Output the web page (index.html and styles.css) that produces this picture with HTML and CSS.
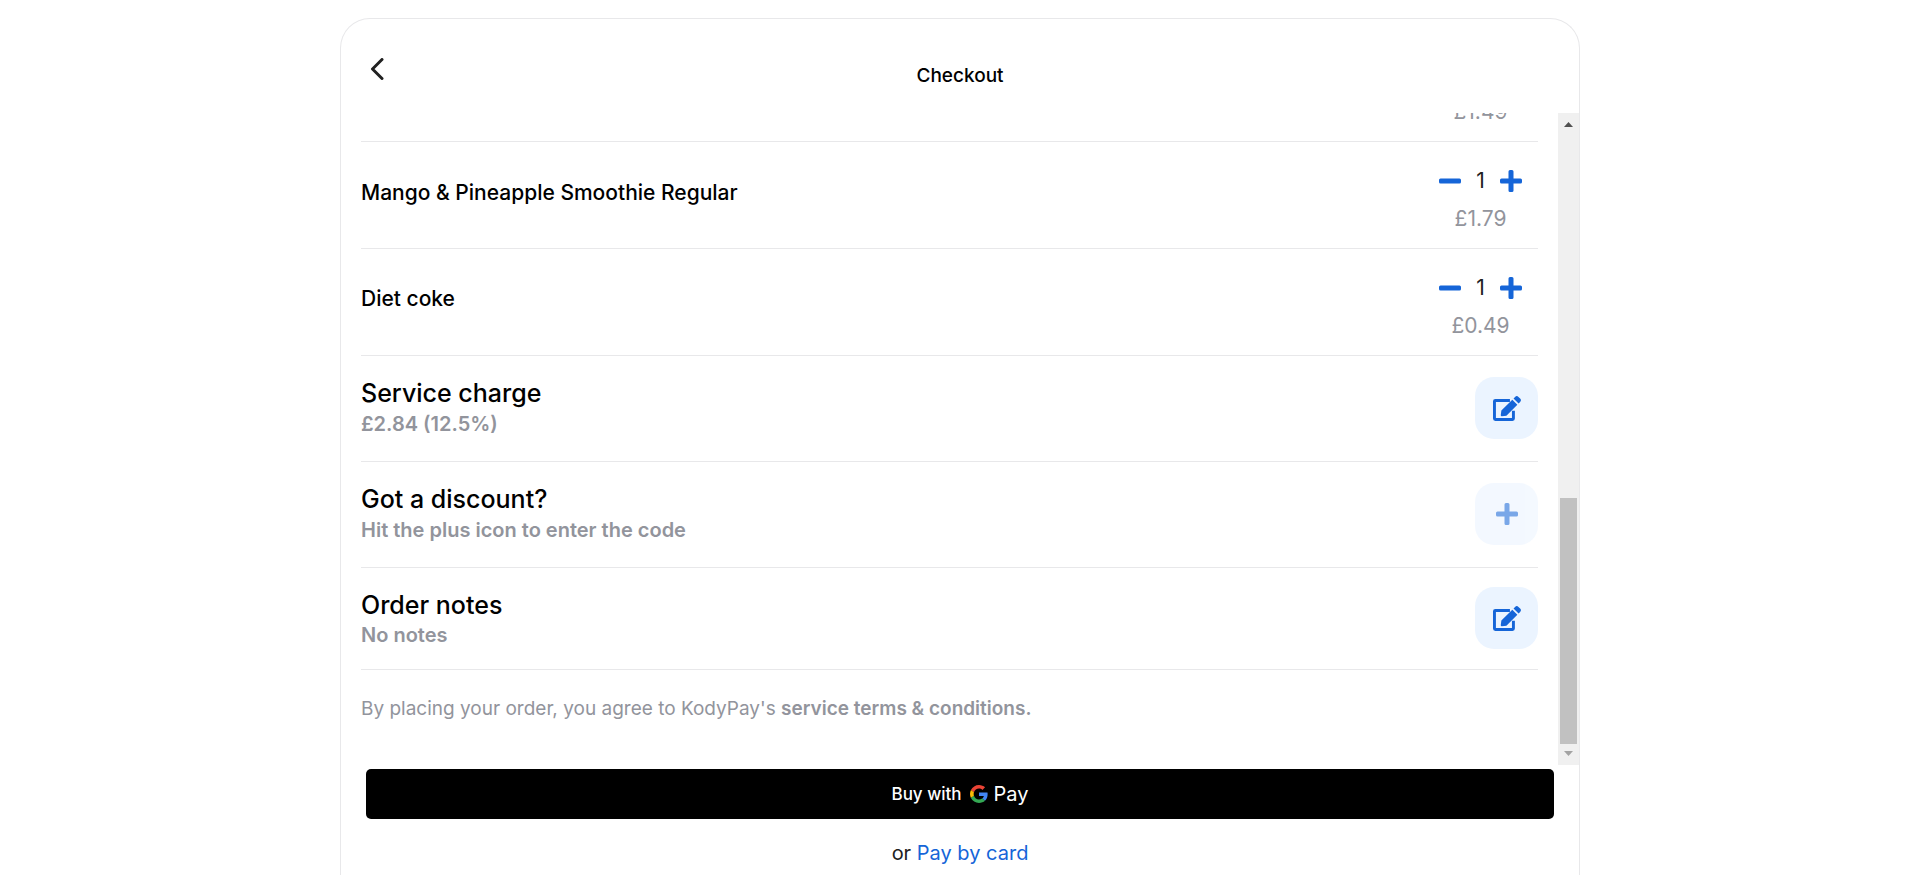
FILE: index.html
```html
<!DOCTYPE html>
<html lang="en">
<head>
<meta charset="utf-8">
<meta name="viewport" content="width=device-width, initial-scale=1">
<title>Checkout</title>
<link rel="stylesheet" href="styles.css">
</head>
<body>
<svg class="sprite" aria-hidden="true">
  <symbol id="edit" viewBox="0 0 576 512"><path d="M348 90H48a18 18 0 0 0-18 18v356a18 18 0 0 0 18 18h354a18 18 0 0 0 18-18V300" fill="none" stroke="currentColor" stroke-width="60"/><path d="M397 74l104 104-225 225-92 12a22 22 0 0 1-24-24l12-92zM422 49l32-32a50 50 0 0 1 70 0l34 34a50 50 0 0 1 0 70l-32 32z" fill="currentColor"/></symbol>
  <symbol id="plus" viewBox="0 0 22 22"><path d="M8.500 1.500Q8.500 0 10 0h2Q13.500 0 13.500 1.500v7h7Q22 8.500 22 10v2Q22 13.500 20.500 13.500h-7v7Q13.500 22 12 22h-2Q8.500 22 8.500 20.500v-7h-7Q0 13.500 0 12v-2Q0 8.500 1.500 8.500h7z" fill="currentColor"/></symbol>
  <symbol id="minus" viewBox="0 0 22 22"><rect y="8.500" width="22" height="5" rx="1.500" fill="currentColor"/></symbol>
</svg>
<main class="card">
  <header class="header">
    <button class="back" type="button" aria-label="Back"><svg viewBox="0 0 14 22"><path d="M12 1.500L2.500 11l9.500 9.500" fill="none" stroke="currentColor" stroke-width="3" stroke-linecap="round" stroke-linejoin="round"/></svg></button>
    <h1 class="title">Checkout</h1>
  </header>
  <div class="viewport">
    <div class="content">
      <section class="item item-last-price">
        <div class="quantity"><p class="price">£1.49</p></div>
      </section>
      <section class="item">
        <h2 class="item-name">Mango &amp; Pineapple Smoothie Regular</h2>
        <div class="quantity">
          <div class="stepper">
            <button type="button" aria-label="Remove one"><svg><use href="#minus"/></svg></button><span>1</span><button type="button" aria-label="Add one"><svg><use href="#plus"/></svg></button>
          </div>
          <p class="price">£1.79</p>
        </div>
      </section>
      <section class="item">
        <h2 class="item-name">Diet coke</h2>
        <div class="quantity">
          <div class="stepper">
            <button type="button" aria-label="Remove one"><svg><use href="#minus"/></svg></button><span>1</span><button type="button" aria-label="Add one"><svg><use href="#plus"/></svg></button>
          </div>
          <p class="price">£0.49</p>
        </div>
      </section>
      <section class="option">
        <div><h2 class="option-title">Service charge</h2><p class="option-detail">£2.84 (12.5%)</p></div>
        <button class="tile" type="button" aria-label="Edit service charge"><svg class="edit-icon"><use href="#edit"/></svg></button>
      </section>
      <section class="option">
        <div><h2 class="option-title">Got a discount?</h2><p class="option-detail">Hit the plus icon to enter the code</p></div>
        <button class="tile tile-muted" type="button" aria-label="Enter discount code"><svg><use href="#plus"/></svg></button>
      </section>
      <section class="option option-compact">
        <div><h2 class="option-title">Order notes</h2><p class="option-detail">No notes</p></div>
        <button class="tile" type="button" aria-label="Edit order notes"><svg class="edit-icon"><use href="#edit"/></svg></button>
      </section>
      <p class="terms">By placing your order, you agree to KodyPay's <a href="#terms">service terms &amp; conditions.</a></p>
    </div>
    <div class="scrollbar" aria-hidden="true">
      <svg class="arrow" viewBox="0 0 9 5"><path d="M0 5L4.500 0 9 5z" fill="#505050"/></svg>
      <div class="thumb"></div>
      <svg class="arrow" viewBox="0 0 9 5"><path d="M0 0h9L4.500 5z" fill="#a3a3a3"/></svg>
    </div>
  </div>
  <footer class="footer">
    <button class="gpay" type="button">
      <span>Buy with</span>
      <svg viewBox="0 0 48 48"><path fill="#EA4335" d="M24 9.500c3.540 0 6.710 1.220 9.210 3.600l6.850-6.850C35.900 2.380 30.470 0 24 0 14.620 0 6.510 5.380 2.560 13.220l7.980 6.190C12.430 13.720 17.740 9.500 24 9.500z"/><path fill="#4285F4" d="M46.980 24.550c0-1.570-.15-3.090-.38-4.550H24v9.020h12.940c-.58 2.960-2.260 5.480-4.780 7.180l7.730 6c4.510-4.180 7.090-10.360 7.090-17.650z"/><path fill="#FBBC05" d="M10.530 28.590c-.48-1.450-.76-2.990-.76-4.590s.27-3.140.76-4.590l-7.980-6.190C.92 16.460 0 20.120 0 24c0 3.880.92 7.540 2.560 10.780l7.970-6.190z"/><path fill="#34A853" d="M24 48c6.480 0 11.930-2.130 15.890-5.810l-7.730-6c-2.150 1.450-4.920 2.300-8.160 2.300-6.260 0-11.570-4.220-13.470-9.910l-7.980 6.190C6.510 42.620 14.620 48 24 48z"/></svg>
      <span class="gpay-name">Pay</span>
    </button>
    <p class="alternative">or <a href="#card">Pay by card</a></p>
  </footer>
</main>
</body>
</html>
```
FILE: styles.css
```css
* { box-sizing: border-box; margin: 0; }
body {
  padding: 18px 20px 0;
  background: #fff;
  color: #000;
  font-family: Inter, "Open Sans", sans-serif;
}
button { padding: 0; border: 0; background: none; color: inherit; font: inherit; cursor: pointer; }
a { text-decoration: none; color: inherit; }
.sprite { position: absolute; width: 0; height: 0; }

.card {
  display: flex;
  flex-direction: column;
  max-width: 1240px;
  height: calc(100vh - 18px);
  margin: 0 auto;
  border: 1px solid #e8e8ea;
  border-bottom: 0;
  border-radius: 30px 30px 0 0;
}

.header {
  display: grid;
  grid-template-columns: 40px 1fr 40px;
  padding: 34px 16px 0;
  height: 94px;
  flex: none;
}
.back { width: 40px; height: 32px; color: #212121; }
.back svg { display: block; width: 14px; height: 22px; margin: 0 auto; }
.title { padding-top: 7px; font-size: 19px; line-height: 32px; font-weight: 500; text-align: center; }

.viewport { display: flex; flex: 1; min-height: 0; }
.content {
  display: flex;
  flex: 1;
  flex-direction: column;
  justify-content: flex-end;
  overflow: hidden;
  padding: 0 20px;
}
.item, .option {
  display: flex;
  flex: none;
  justify-content: space-between;
  border-bottom: 1px solid #e8e8ea;
}
.item { align-items: center; padding: 25px 16px 15px 0; }
.item-last-price { justify-content: flex-end; }
.item-name { padding-bottom: 14px; font-size: 21px; line-height: 28px; font-weight: 500; }
.item:nth-child(3) .item-name { padding-bottom: 16px; }
.quantity { display: grid; gap: 10px; width: 83px; }
.stepper { display: flex; align-items: center; justify-content: space-between; height: 28px; color: #212121; font-size: 21px; line-height: 28px; }
.stepper svg, .tile svg { display: block; width: 22px; height: 22px; }
.stepper button { color: #1565d8; }
.price { color: #92949c; font-size: 21px; line-height: 28px; text-align: center; }

.option { padding: 21px 0 22px; }
.option-compact { padding: 19px 0 20px; }
.option-compact .option-title { padding-top: 2px; }
.option-title { font-size: 25px; line-height: 32px; font-weight: 500; }
.option-compact .option-detail { line-height: 28px; }
.option-detail { color: #92949c; font-size: 20px; line-height: 30px; font-weight: 600; }
.tile {
  display: grid;
  place-items: center;
  width: 63px;
  height: 62px;
  border-radius: 19px;
  background: #ebf4ff;
  color: #1565d8;
}
.tile .edit-icon { width: 28px; height: 25px; }
.tile-muted { opacity: .57; }
.terms { flex: none; padding: 24px 0 41px; color: #92949c; font-size: 19px; line-height: 30px; }
.terms a { font-weight: 600; }

.scrollbar {
  display: flex;
  flex: none;
  flex-direction: column;
  align-items: center;
  width: 21px;
  padding: 9px 0;
  background: #f0f0f0;
}
.arrow { width: 9px; height: 5px; }
.thumb { width: 17px; height: 246px; margin: auto 0 7px; background: #c1c1c1; }

.footer { flex: none; padding: 4px 25px 7px; }
.gpay {
  display: flex;
  align-items: center;
  justify-content: center;
  width: 100%;
  height: 50px;
  border-radius: 5px;
  background: #000;
  color: #fff;
  font-size: 17px;
  font-weight: 500;
}
.gpay svg { width: 18px; height: 18px; margin: 0 6px 0 8px; }
.gpay-name { font-size: 20px; font-weight: 400; }
.alternative { padding-top: 19px; color: #212121; font-size: 20px; line-height: 30px; text-align: center; }
.alternative a { color: #1565d8; }
```
